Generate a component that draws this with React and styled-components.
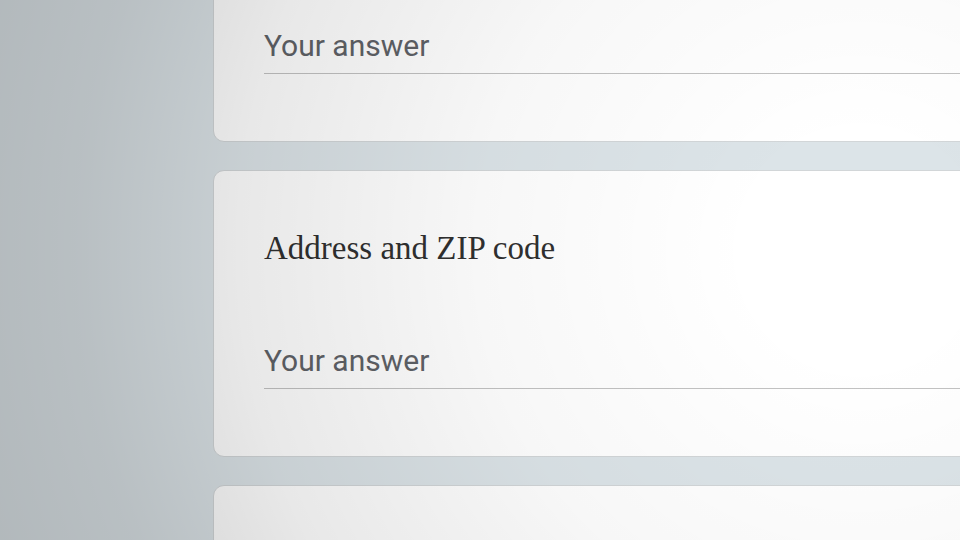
import React from 'react';
import styled, { createGlobalStyle } from 'styled-components';

const GlobalStyle = createGlobalStyle`
    html, body {
        margin: 0;
        padding: 0;
        background: #dce4e8;
        overflow: hidden;
    }
`

const Page = styled.div`
    position: relative;
    width: 960px;
    height: 540px;
    overflow: hidden;
    background: #dce4e8;
`

const FormColumn = styled.div`
    display: flex;
    flex-direction: column;
    gap: 28px;
    width: 900px;
    margin-left: 213px;
    margin-top: -19px;
`

const Card = styled.div`
    background: #ffffff;
    border: 1px solid #d2d6d8;
    border-radius: 11px;
    padding: ${props => props.$top}px 0 ${props => props.$bottom}px 50px;
    display: flex;
    flex-direction: column;
    gap: 75px;
    min-height: ${props => props.$minHeight || 0}px;
`

const QuestionTitle = styled.div`
    font-family: "Liberation Serif", "Times New Roman", serif;
    font-size: 33px;
    line-height: 40px;
    color: #303030;
`

const AnswerField = styled.div`
    font-family: Roboto, "Noto Sans", sans-serif;
    font-size: 30px;
    line-height: 36px;
    color: #5f6267;
    padding-bottom: 9px;
    border-bottom: 1px solid #c2c2c2;
`

const Vignette = styled.div`
    position: absolute;
    inset: 0;
    pointer-events: none;
    background: radial-gradient(circle at 860px 250px,
        rgba(0, 0, 0, 0) 110px,
        rgba(0, 0, 0, 0.03) 380px,
        rgba(0, 0, 0, 0.09) 620px,
        rgba(0, 0, 0, 0.16) 780px,
        rgba(0, 0, 0, 0.21) 1000px);
`

const App = () => {
    return (
        <Page>
            <GlobalStyle />
            <FormColumn>
                <Card $top={46} $bottom={67}>
                    <AnswerField>Your answer</AnswerField>
                </Card>
                <Card $top={57} $bottom={67}>
                    <QuestionTitle>Address and ZIP code</QuestionTitle>
                    <AnswerField>Your answer</AnswerField>
                </Card>
                <Card $top={54} $bottom={0} $minHeight={120} />
            </FormColumn>
            <Vignette />
        </Page>
    );
};

export default App;
